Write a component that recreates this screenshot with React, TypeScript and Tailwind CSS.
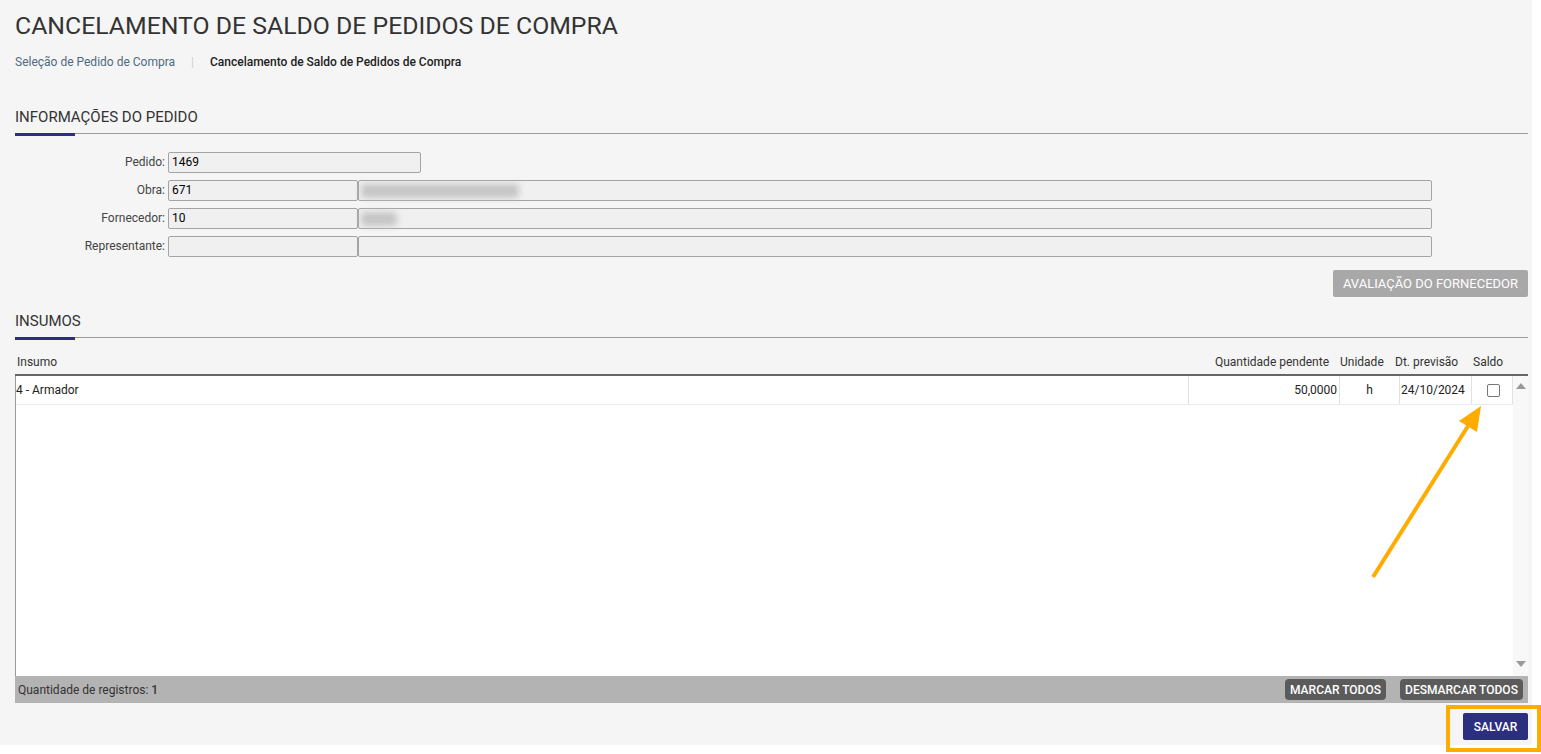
import React from "react";

const navy = "bg-[#2c2f7e]";

function SectionTitle({ title }: { title: string }) {
  return (
    <div>
      <div className="text-[15px] leading-[20px] text-[#333]">{title}</div>
      <div className="mt-[6px] flex h-[3px] items-start">
        <div className={`h-[3px] w-[60px] ${navy}`} />
        <div className="h-px flex-1 bg-[#9a9a9a]" />
      </div>
    </div>
  );
}

function Field({
  label,
  code,
  name,
  blur,
  single,
}: {
  label: string;
  code: string;
  name?: string;
  blur?: number;
  single?: boolean;
}) {
  return (
    <div className="flex h-[21px] items-stretch">
      <div className="w-[153px] pr-[3px] text-right text-[12px] leading-[21px] text-[#444]">
        {label}
      </div>
      <div
        className={`${single ? "w-[253px]" : "w-[190px]"} rounded-[2px] border border-[#a4a4a4] bg-[#f0f0f0] pl-[3px] text-[12px] leading-[19px] text-black`}
      >
        {code}
      </div>
      {!single && (
        <div className="flex w-[1074px] items-center rounded-[2px] border border-[#a4a4a4] bg-[#f0f0f0] pl-[2px]">
          {blur ? (
            <div
              className="h-[14px] rounded-sm bg-[#c6c6c6] blur-[3px]"
              style={{ width: blur }}
            />
          ) : null}
          {name}
        </div>
      )}
    </div>
  );
}

export default function App() {
  return (
    <div
      className="relative h-[754px] w-[1541px] overflow-hidden bg-white"
      style={{ fontFamily: "Roboto, 'Liberation Sans', sans-serif" }}
    >
      <div className="flex h-[745px] w-[1532px] flex-col bg-[#f5f5f5] pl-[15px] pr-[4px]">
        {/* Header */}
        <h1 className="pt-[11px] text-[24.8px] leading-[30px] text-[#333]">
          CANCELAMENTO DE SALDO DE PEDIDOS DE COMPRA
        </h1>
        <div className="mt-[13px] flex items-center text-[12px] leading-[16px]">
          <span className="text-[#4f6a80]">Seleção de Pedido de Compra</span>
          <span className="mx-[16px] text-[#d0d0d0]">|</span>
          <span className="font-medium text-[#222]">
            Cancelamento de Saldo de Pedidos de Compra
          </span>
        </div>

        {/* Informações */}
        <div className="mt-[37px]">
          <SectionTitle title="INFORMAÇÕES DO PEDIDO" />
        </div>
        <div className="mt-[16px] flex flex-col gap-[7px]">
          <Field label="Pedido:" code="1469" single />
          <Field label="Obra:" code="671" blur={158} />
          <Field label="Fornecedor:" code="10" blur={36} />
          <Field label="Representante:" code="" />
        </div>
        <div className="mt-[13px] flex justify-end">
          <button className="h-[27px] w-[195px] rounded-[2px] bg-[#a8a8a8] text-[13px] text-white">
            AVALIAÇÃO DO FORNECEDOR
          </button>
        </div>

        {/* Insumos */}
        <div className="mt-[14px]">
          <SectionTitle title="INSUMOS" />
        </div>
        <div className="flex h-[36px] items-end border-b-2 border-[#666] pb-[4px] text-[12px] leading-[16px] text-[#333]">
          <div className="flex-1 pl-[2px]">Insumo</div>
          <div className="w-[151px] pr-[11px] text-right">Quantidade pendente</div>
          <div className="w-[55px]">Unidade</div>
          <div className="w-[78px]">Dt. previsão</div>
          <div className="w-[40px]">Saldo</div>
          <div className="w-[15px]" />
        </div>
        <div className="flex h-[300px] border-l border-[#9a9a9a] bg-white">
          <div className="flex-1">
            <div className="flex h-[29px] border-b border-[#ececec] text-[12px] text-[#222]">
              <div className="flex flex-1 items-center border-r border-[#e2e2e2]">
                4 - Armador
              </div>
              <div className="flex w-[151px] items-center justify-end border-r border-[#e2e2e2] pr-[2px]">
                50,0000
              </div>
              <div className="flex w-[60px] items-center justify-center border-r border-[#e2e2e2]">
                h
              </div>
              <div className="flex w-[72px] items-center border-r border-[#e2e2e2] pl-[1px]">
                24/10/2024
              </div>
              <div className="flex w-[41px] items-center justify-center border-r border-[#e2e2e2] pl-[2px]">
                <div className="h-[13px] w-[13px] rounded-[2px] border border-[#777] bg-white" />
              </div>
            </div>
          </div>
          <div className="flex w-[15px] flex-col items-center justify-between bg-[#f8f8f8] pb-[9px] pt-[7px]">
            <div className="h-0 w-0 border-x-[5px] border-b-[6px] border-x-transparent border-b-[#9a9a9a]" />
            <div className="h-0 w-0 border-x-[5px] border-t-[6px] border-x-transparent border-t-[#9a9a9a]" />
          </div>
        </div>
        <div className="flex h-[27px] items-center bg-[#b3b3b3] pl-[3px] pr-[5px] text-[12px] text-[#333]">
          <div className="flex-1">
            Quantidade de registros: <span className="font-medium">1</span>
          </div>
          <button className="h-[21px] w-[101px] rounded-[4px] bg-[#5b5b5b] text-[12px] font-medium text-white">
            MARCAR TODOS
          </button>
          <button className="ml-[14px] h-[21px] w-[123px] rounded-[4px] bg-[#5b5b5b] text-[12px] font-medium text-white">
            DESMARCAR TODOS
          </button>
        </div>
        <div className="mt-[10px] flex justify-end">
          <button className={`h-[27px] w-[65px] rounded-[2px] ${navy} text-[12px] font-medium text-white`}>
            SALVAR
          </button>
        </div>
      </div>

      {/* annotation */}
      <div className="pointer-events-none absolute left-[1446px] top-[705px] h-[47px] w-[95px] border-[4px] border-[#ffab00]" />
      <svg
        className="pointer-events-none absolute left-0 top-0"
        width="1541"
        height="754"
        viewBox="0 0 1541 754"
      >
        <line x1="1373" y1="577" x2="1468" y2="426" stroke="#ffab00" strokeWidth="4" />
        <polygon points="1481,406 1477,432 1459,421" fill="#ffab00" />
      </svg>
    </div>
  );
}
